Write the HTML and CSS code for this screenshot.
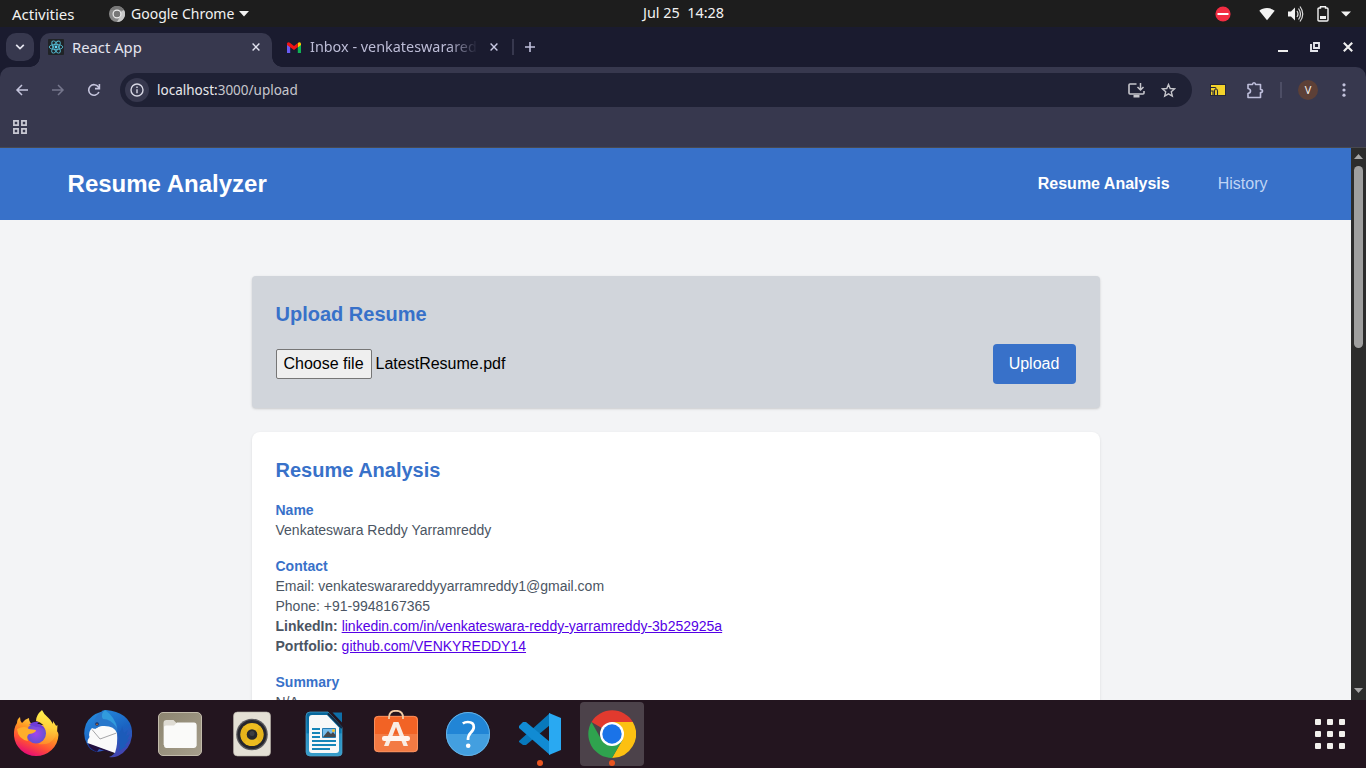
FILE: index.html
```html
<!DOCTYPE html>
<html lang="en">
<head>
<meta charset="utf-8">
<title>React App</title>
<link rel="stylesheet" href="styles.css">
</head>
<body>
<div class="desktop">
  <header class="topbar">
    <span class="activities">Activities</span>
    <div class="app-menu">
      <svg width="16" height="16" viewBox="0 0 16 16"><circle cx="8" cy="8" r="8" fill="#888"/><path d="M8 8 15 4A8 8 0 0 1 8 16l4-7z" fill="#c8c8c8"/><path d="M1 4a8 8 0 0 1 14 0H8z" fill="#777"/><circle cx="8" cy="8" r="3.9" fill="#777" stroke="#eee" stroke-width="1.2"/></svg>
      <span class="app-name">Google Chrome</span>
      <svg width="10" height="6" viewBox="0 0 10 6"><path d="M0 0h10L5 5.5z" fill="#f2f2f2"/></svg>
    </div>
    <span class="clock">Jul 25  14:28</span>
    <div class="status">
      <svg class="dnd" width="16" height="16" viewBox="0 0 16 16"><circle cx="8" cy="8" r="7.6" fill="#f22c42"/><path d="M2.5 7h11v2h-11z" fill="#fff"/></svg>
      <svg class="wifi" width="16" height="16" viewBox="0 0 16 16"><path d="M.3 4.8C4.2 1.2 11.8 1.2 15.7 4.8L8 14.3z" fill="#f2f2f2"/></svg>
      <svg class="volume" width="16" height="16" viewBox="0 0 16 16"><path d="M0 5.500h3l4-4v13l-4-4H0z" fill="#f2f2f2"/><path d="M9 5q2 3 0 6M10.500 2.500q4 5.500 0 11M12 .5q5.500 7.500 0 15" fill="none" stroke="#ddd" stroke-width="1.2"/></svg>
      <svg class="battery" width="12" height="16" viewBox="0 0 12 16"><path d="M3.500 2V.8h5V2H10q1 0 1 1v11q0 1-1 1H2q-1 0-1-1V3q0-1 1-1z" fill="none" stroke="#f2f2f2" stroke-width="1.4"/><path d="M3 10h6v3H3z" fill="#f2f2f2"/></svg>
      <svg width="10" height="6" viewBox="0 0 10 6"><path d="M0 .5h10L5 5.500z" fill="#f2f2f2"/></svg>
    </div>
  </header>

  <div class="tabstrip">
    <button class="tab-search"><svg width="10" height="6" viewBox="0 0 10 6"><path d="M1.2.8 5 4.600 8.800.8" fill="none" stroke="#e4e4ee" stroke-width="1.7"/></svg></button>
    <div class="tab tab-active">
      <svg width="16" height="16" viewBox="0 0 16 16"><rect width="16" height="16" rx="1" fill="#202326"/><g fill="none" stroke="#53b9d1" stroke-width=".9"><ellipse cx="8" cy="8" rx="6.8" ry="2.600"/><ellipse cx="8" cy="8" rx="6.8" ry="2.600" transform="rotate(60 8 8)"/><ellipse cx="8" cy="8" rx="6.8" ry="2.600" transform="rotate(120 8 8)"/></g><circle cx="8" cy="8" r="1.4" fill="#61dafb"/></svg>
      <span class="tab-title">React App</span>
      <svg class="close" width="8" height="8" viewBox="0 0 8 8"><path d="m.6.6 6.800 6.800M7.400.6.6 7.400" stroke="#e2e2ef" stroke-width="1.4"/></svg>
    </div>
    <div class="tab tab-idle">
      <svg width="14" height="11" viewBox="0 0 14 11"><path d="M0 2v9h3.200V4.500z" fill="#685cf2"/><path d="M10.800 4.500V11H14V2z" fill="#0fb255"/><path d="M10.800 1v4.500L14 3V1.500Q13-.5 10.800 1z" fill="#ffc400"/><path d="M0 3V1.500Q1-.5 3.200 1L7 4l3.800-3v4L7 8 3.200 5.300z" fill="#f21414"/></svg>
      <span class="tab-title tab-fade">Inbox - venkateswarared</span>
      <svg class="close" width="8" height="8" viewBox="0 0 8 8"><path d="m.6.6 6.800 6.800M7.400.6.6 7.400" stroke="#c8c8e2" stroke-width="1.4"/></svg>
    </div>
    <span class="tab-divider"></span>
    <svg class="new-tab" width="10" height="10" viewBox="0 0 10 10"><path d="M5 0v10M0 5h10" stroke="#c0c0dc" stroke-width="1.6"/></svg>
    <div class="window-controls">
      <svg width="10" height="12" viewBox="0 0 10 12"><path d="M0 9h10v2H0z" fill="#eee"/></svg>
      <svg width="10" height="10" viewBox="0 0 10 10"><path d="M4 1h5v5H4zM1 2v7h7" fill="none" stroke="#e4e5ec" stroke-width="1.9"/></svg>
      <svg width="10" height="10" viewBox="0 0 10 10"><path d="m.8.8 8.400 8.400M9.200.8.8 9.200" stroke="#eee" stroke-width="2.1"/></svg>
    </div>
  </div>

  <div class="toolbar">
    <svg class="back" width="14" height="14" viewBox="0 0 14 14"><path d="M13 7H2.500M7 2 2 7l5 5" fill="none" stroke="#c5c5dd" stroke-width="1.5"/></svg>
    <svg class="forward" width="14" height="14" viewBox="0 0 14 14"><path d="M1 7h10.500M7 2l5 5-5 5" fill="none" stroke="#75768c" stroke-width="1.5"/></svg>
    <svg class="reload" width="14" height="14" viewBox="0 0 14 14"><path d="M11.900 9A5.300 5.300 0 1 1 11.400 4L12 5" fill="none" stroke="#c5c5dd" stroke-width="1.6"/><path d="M12.400 1v4.600H8" fill="none" stroke="#c5c5dd" stroke-width="1.6"/></svg>
    <div class="omnibox">
      <span class="site-info"><svg width="14" height="14" viewBox="0 0 14 14"><circle cx="7" cy="7" r="6" fill="none" stroke="#d8d8e4" stroke-width="1.4"/><path d="M7 6.200v4M7 3.600v1.500" stroke="#d8d8e4" stroke-width="1.4"/></svg></span>
      <span class="url"><span class="host">localhost:</span>3000/upload</span>
      <svg class="install" width="17" height="15" viewBox="0 0 17 15"><path d="M8.500 1H2Q1 1 1 2v8q0 1 1 1h13q1 0 1-1V8" fill="none" stroke="#c6c6cc" stroke-width="1.6"/><path d="M5.500 12h6v2.500h-6z" fill="#c6c6cc"/><path d="M12.500 0v6.500M9.500 4l3 3 3-3" fill="none" stroke="#c6c6cc" stroke-width="1.5"/></svg>
      <svg class="star" width="15" height="15" viewBox="0 0 15 15"><path d="m7.500 1.500 1.700 4 4.400.4-3.300 2.900 1 4.300-3.800-2.300-3.800 2.300 1-4.300-3.300-2.900 4.400-.4z" fill="none" stroke="#c6c6cc" stroke-width="1.4"/></svg>
    </div>
    <svg class="extension" width="16" height="12" viewBox="0 0 16 12"><rect width="16" height="12" fill="#252739"/><path d="M1 1h14v10H1z" fill="#f3d32a"/><path d="M1 3.500h4q1 0 1 1M4.500 11V7q0-2 1.500-2T7.500 7v4M1 7h2v4" fill="none" stroke="#252739" stroke-width="1.1"/></svg>
    <svg class="puzzle" width="18" height="17" viewBox="0 0 18 17"><path d="M2 2.500h4.500Q6.500.8 8 .8t1.500 1.700H14.500v5q2 0 2 1.500t-2 1.500v5H2v-4q2.500-.5 2.500-2.500T2 6.500z" fill="none" stroke="#bfbfdc" stroke-width="1.6" stroke-linejoin="round"/></svg>
    <span class="toolbar-divider"></span>
    <span class="avatar">V</span>
    <svg class="kebab" width="4" height="14" viewBox="0 0 4 14"><g fill="#c2c2dc"><circle cx="2" cy="1.800" r="1.600"/><circle cx="2" cy="7" r="1.600"/><circle cx="2" cy="12.200" r="1.600"/></g></svg>
  </div>

  <div class="bookmarks">
    <svg width="14" height="14" viewBox="0 0 14 14"><path d="M.9.9h4.200v4.200H.9zM8.900.9h4.200v4.200H8.900zM.9 8.900h4.200v4.200H.9zM8.900 8.900h4.200v4.200H8.900z" fill="none" stroke="#c9c9d4" stroke-width="1.7"/></svg>
  </div>

  <div class="viewport">
    <div class="page">
      <nav class="navbar">
        <h1 class="brand">Resume Analyzer</h1>
        <div class="nav-links">
          <a class="nav-link nav-current">Resume Analysis</a>
          <a class="nav-link">History</a>
        </div>
      </nav>
      <main class="content">
        <section class="upload-card">
          <h2 class="card-title">Upload Resume</h2>
          <div class="upload-row">
            <div class="file-field"><span class="file-button">Choose file</span><span>LatestResume.pdf</span></div>
            <button class="upload-button">Upload</button>
          </div>
        </section>
        <section class="analysis-card">
          <h2 class="card-title">Resume Analysis</h2>
          <div class="block">
            <h3 class="label">Name</h3>
            <p>Venkateswara Reddy Yarramreddy</p>
          </div>
          <div class="block">
            <h3 class="label">Contact</h3>
            <p>Email: venkateswarareddyyarramreddy1@gmail.com</p>
            <p>Phone: +91-9948167365</p>
            <p><strong>LinkedIn:</strong> <a class="link">linkedin.com/in/venkateswara-reddy-yarramreddy-3b252925a</a></p>
            <p><strong>Portfolio:</strong> <a class="link">github.com/VENKYREDDY14</a></p>
          </div>
          <div class="block">
            <h3 class="label">Summary</h3>
            <p>N/A</p>
          </div>
        </section>
      </main>
    </div>
    <div class="scrollbar">
      <svg width="9" height="5" viewBox="0 0 9 5"><path d="M0 5 4.500 0 9 5z" fill="#a6a6a6"/></svg>
      <span class="thumb"></span>
      <svg class="scroll-down" width="9" height="5" viewBox="0 0 9 5"><path d="M0 0h9L4.500 5z" fill="#a6a6a6"/></svg>
    </div>
  </div>

  <footer class="dock">
    <span class="dock-item"><svg width="48" height="48" viewBox="0 0 48 48">
      <defs>
        <linearGradient id="fx" x1=".8" y1="0" x2=".3" y2="1"><stop offset=".1" stop-color="#ffe04b"/><stop offset=".4" stop-color="#ff9b22"/><stop offset=".7" stop-color="#ff4f35"/><stop offset="1" stop-color="#e4057c"/></linearGradient>
        <linearGradient id="fy" x1=".5" y1="0" x2=".4" y2="1"><stop offset="0" stop-color="#fff44f"/><stop offset=".5" stop-color="#ffd03a"/><stop offset="1" stop-color="#ff8a2a"/></linearGradient>
        <radialGradient id="fp"><stop offset="0" stop-color="#a344ee"/><stop offset="1" stop-color="#6552d0"/></radialGradient>
      </defs>
      <path d="M8 7q0 4 2 6 3-4 7-5 0 4 3 6l20 2q6 4 6.500 9A22.300 22 0 0 1 24 46 22.300 22 0 0 1 2 26Q1.500 18 5 13q0-4 3-6z" fill="url(#fx)"/>
      <path d="M30 0q-6 5-6 11 9 2 10 11-1 9-8 12 12 2 17-7 3-6 2.500-12Q44 17 43 14l-2-3v3q-2-4-5-6.500-4-3-6-7.500z" fill="url(#fy)"/>
      <circle cx="24" cy="23.500" r="10" fill="url(#fp)"/>
      <path d="M17 15q4-4 10-3l-2 2q7 1 8 6-4-4-9-3-3-2-7-2z" fill="#6f3bd8"/>
      <path d="M5 19q8-4 12 0l7 1q0 3-7 4-3 2-1 7-10-2-11-12z" fill="#ffae2b"/>
    </svg></span>
    <span class="dock-item"><svg width="48" height="48" viewBox="0 0 48 48">
      <defs><linearGradient id="tb" x1=".3" y1="0" x2=".8" y2="1"><stop offset="0" stop-color="#2589dc"/><stop offset=".5" stop-color="#1a63c2"/><stop offset="1" stop-color="#4a3fae"/></linearGradient></defs>
      <path d="M22 0Q18 0 18 1.500 6 5 2 14q-4 11 1 20 4 6 10 8l10-2 8 2q-1 3-6 5 4 1 9-1 12-6 14-20 1-13-8-20Q33 1 22 0z" fill="url(#tb)"/>
      <path d="M3 32.500 13 42Q4 40 3 32.500z" fill="#183d9b"/>
      <path d="M4 32.500 31 43l-7-1-9-3-2 3Q5 39 4 32.500z" fill="#22103f"/>
      <path d="M8 18q3 2 8-2h13q4 2 4 7 1 11-2 20L3.500 33q-.5-3 2-6-1.500-5 2.500-9z" fill="#fafafa"/>
      <path d="m8 19.500 8 9.500 16.500-6" fill="none" stroke="#a5a5a8" stroke-width="1"/>
      <path d="M18 1.500Q10 6 10 14q0 4 1 5 3-3 7-3 12-1 15 7 2-11-6-15Q23 4 18 1.500z" fill="#2877cb"/>
      <path d="M21 0q-5 4-2 9 8 0 14 9-2-11-12-18z" fill="#319bdd"/>
      <path d="M34 24q4-4 4-8l2 7 4-3-2 6 4-2-3 6 3-1-5 6 2 1-8 5q2-9-1-17z" fill="#1c5bb9"/>
      <circle cx="13" cy="14" r="1.800" fill="#122d68"/><circle cx="13" cy="14.300" r=".9" fill="#b66d32"/>
    </svg></span>
    <span class="dock-item"><svg width="48" height="48" viewBox="0 0 48 48"><defs><linearGradient id="fi" x2="1" y2="1"><stop stop-color="#8c8570"/><stop offset="1" stop-color="#a69e8c"/></linearGradient></defs><rect x="2.500" y="2.500" width="43" height="43" rx="4.500" fill="url(#fi)" stroke="#c2bbab"/><path d="M7.500 35V13q0-3 3-3h7l3 3h17q3 0 3 3v20z" fill="#dedbd3"/><path d="M8 17q0-1.500 2-1.500h8l3-3h17q2.500 0 2.500 2.500v20q0 3-3 3H10.500q-2.500 0-2.500-3z" fill="#fafaf9"/></svg></span>
    <span class="dock-item"><svg width="48" height="48" viewBox="0 0 48 48"><rect x="5.500" y="2" width="37" height="44" rx="4" fill="#e4e0d5" stroke="#b7b2a7" stroke-width=".6"/><circle cx="24" cy="24.500" r="15.800" fill="#5b5a5e"/><circle cx="24" cy="24.500" r="14.500" fill="#25262d"/><circle cx="24" cy="24.500" r="11.600" fill="#ecbc20"/><path d="m24 24.500-8 8a11.400 11.400 0 0 1 0-16zM24 24.500l8-8a11.400 11.400 0 0 1 0 16z" fill="#e5b31b"/><circle cx="24" cy="24.500" r="5.300" fill="#25272c"/><circle cx="24" cy="23.500" r="2.500" fill="#3c3e43"/></svg></span>
    <span class="dock-item"><svg width="48" height="48" viewBox="0 0 48 48"><defs><linearGradient id="wr" x2="0" y2="1"><stop stop-color="#086599"/><stop offset=".47" stop-color="#0877af"/><stop offset=".5" stop-color="#2690c4"/><stop offset="1" stop-color="#389dca"/></linearGradient></defs><path d="M10 2h18l14 15v26q0 3-4 3H10q-4 0-4-4V6q0-4 4-4z" fill="url(#wr)" stroke="#4ca4cd" stroke-width=".7"/><path d="M12 5h15l12 12.500V40q0 3-3 3H12q-3 0-3-3V8q0-3 3-3z" fill="#f8f8f8"/><path d="M32.500 2.500H42v10z" fill="#0f6fa8"/><path d="M28 3.500 42 18" stroke="#132c45" stroke-width="2"/><path d="M12 19h8M12 23h8M12 27h8M12 31h24M12 35h24M12 39h18" stroke="#1685b8" stroke-width="1.800"/><path d="M22.500 18.500h13v9h-13z" fill="#76bdec" stroke="#247bb1"/><path d="m23 27 5-6 3 3 2-2 2.500 3v2z" fill="#46484c"/><circle cx="33.500" cy="20.500" r="1.500" fill="#f4c02a"/></svg></span>
    <span class="dock-item"><svg width="48" height="48" viewBox="0 0 48 48"><path d="M6 6h36q4 0 4 4v14H2V10q0-4 4-4z" fill="#f26325"/><path d="M2 24h44v14q0 4-4 4H6q-4 0-4-4z" fill="#f37a43"/><rect x="2.500" y="6.300" width="43" height="35.500" rx="4" fill="none" stroke="#fa9a6c" stroke-width=".8"/><path d="M17 9V7.500Q17 .8 24 .8t7 6.700V9" fill="none" stroke="#f2cda6" stroke-width="1.800"/><path d="M21.500 12h5L36 36h-4.500L24 17l-7.500 19H12z" fill="#f8ece4"/><rect x="10" y="26" width="28" height="5" rx="2.200" fill="#fff5ef"/></svg></span>
    <span class="dock-item"><svg width="48" height="48" viewBox="0 0 48 48"><path d="M2 24a22 22 0 0 1 44 0z" fill="#2185d6"/><path d="M2 24a22 22 0 0 0 44 0z" fill="#439fe0"/><circle cx="24" cy="24" r="21.500" fill="none" stroke="#65b2e6"/><path d="M18.800 13.500q2-1.500 5-1.500 6 0 6 5 0 3-3.300 6-2.500 2.500-2.500 7" fill="none" stroke="#fff" stroke-width="2.700"/><circle cx="24.200" cy="35.700" r="2.300" fill="#fff"/></svg></span>
    <span class="dock-item"><svg width="48" height="48" viewBox="0 0 48 48"><path d="M3 31 34 3v12L10 35H7l-4-3z" fill="#0879bc"/><path d="m3 16 4-4h3l24 20v13L3 18z" fill="#118bd3"/><path d="m33 3 12 5v32l-12 5z" fill="#29a9f2"/></svg><span class="running"></span></span>
    <span class="dock-item dock-active"><svg width="48" height="48" viewBox="0 0 48 48"><path d="M24 24 3.500 12A24 24 0 0 1 44.800 12z" fill="#e23a2e"/><path d="M24 12h20.800A24 24 0 0 1 24 48l10.400-18z" fill="#fcc012"/><path d="M3.500 12A24 24 0 0 0 24 48l10.400-18H13.600z" fill="#2fa34e"/><circle cx="24" cy="24" r="12" fill="#fff"/><circle cx="24" cy="24" r="9.700" fill="#1a73e8"/></svg><span class="running"></span></span>
    <div class="app-grid"><i></i><i></i><i></i><i></i><i></i><i></i><i></i><i></i><i></i></div>
  </footer>
</div>
</body>
</html>
```
FILE: styles.css
```css
* { box-sizing: border-box; }
body { margin: 0; overflow: hidden; font-family: "Liberation Sans", Arial, sans-serif; }
h1, h2, h3, p { margin: 0; }
svg { display: block; flex-shrink: 0; }
button { border: 0; padding: 0; font: inherit; }

.desktop { width: 1366px; height: 768px; display: flex; flex-direction: column; overflow: hidden; background: #1a1b2f; }
.topbar, .tabstrip, .toolbar { font-family: "Noto Sans", sans-serif; white-space: pre; flex-shrink: 0; }

.topbar { height: 27px; display: grid; grid-template-columns: 109px 534px 1fr auto; align-items: center; background: #1d1d1d; color: #f2f2f2; font-size: 14px; line-height: 26px; }
.activities { padding-left: 12px; font-size: 15px; }
.app-menu { display: flex; align-items: center; gap: 6px; }
.app-menu svg:last-child { margin-left: -1px; }
.clock { font-size: 14.4px; line-height: 24px; padding-bottom: 2px; }
.status { display: flex; align-items: center; padding-right: 15px; }
.dnd { margin-right: 28px; }
.wifi { margin-right: 13px; }
.volume { margin-right: 13px; }
.battery { margin-right: 12px; }

.tabstrip { height: 40px; display: flex; align-items: center; background: #1a1b2f; padding-right: 13px; }
.tab-search { width: 28px; height: 28px; margin: 0 6px; border-radius: 10px; background: #37384e; display: flex; align-items: center; justify-content: center; }
.tab { display: flex; align-items: center; height: 34px; }
.tab-active { position: relative; align-self: flex-end; width: 232px; padding: 0 12px 6px 8px; border-radius: 10px 10px 0 0; background: #37384e; color: #e4e4ef; }
.tab-active::before, .tab-active::after { content: ""; position: absolute; bottom: 0; width: 10px; height: 10px; }
.tab-active::before { right: 100%; background: radial-gradient(circle at 0 0, transparent 9.5px, #37384e 10px); }
.tab-active::after { left: 100%; background: radial-gradient(circle at 100% 0, transparent 9.5px, #37384e 10px); }
.tab-active .tab-title { margin-left: 8px; }
.tab-title { font-size: 14.8px; line-height: 20px; }
.tab-idle { width: 241px; padding: 0 15px; color: #bcbcd6; }
.tab-fade { width: 168px; margin-left: 9px; overflow: hidden; font-size: 14.4px; -webkit-mask-image: linear-gradient(90deg, #000 82%, transparent); mask-image: linear-gradient(90deg, #000 82%, transparent); }
.close { margin-left: auto; }
.tab-divider { width: 2px; height: 16px; margin-left: -1px; background: #37384e; }
.new-tab { margin-left: 11px; }
.window-controls { margin-left: auto; display: flex; align-items: center; gap: 23px; }
.window-controls svg:first-child { margin-right: -1px; margin-top: -1px; }

.toolbar { height: 46px; display: flex; align-items: center; padding: 0 20px 0 15px; background: #37384e; border-radius: 10px 10px 0 0; }
.back { margin-right: 22px; }
.forward { margin-right: 22px; }
.reload { margin-right: 19px; }
.omnibox { width: 1072px; height: 34px; display: flex; align-items: center; padding: 0 16px 0 5px; border-radius: 17px; background: #1f2135; color: #c7c7cd; }
.site-info { width: 24px; height: 24px; display: flex; align-items: center; justify-content: center; border-radius: 50%; background: #37384e; }
.url { margin-left: 8px; font-size: 13.5px; line-height: 20px; }
.host { color: #e8e8ec; }
.install { margin-left: auto; margin-right: 16px; }
.extension { margin-left: 18px; }
.puzzle { margin-left: 20px; }
.toolbar-divider { width: 2px; height: 16px; margin-left: 16px; background: #4d4e65; }
.avatar { width: 20px; height: 20px; margin-left: 16px; border-radius: 50%; background: #5d4037; color: #f4eeee; font-size: 11px; line-height: 20px; text-align: center; }
.kebab { margin-left: auto; }
.bookmarks { height: 35px; display: flex; align-items: flex-start; flex-shrink: 0; padding: 7px 13px; background: #37384e; border-bottom: 1px solid #49494f; }

.viewport { height: 552px; display: flex; flex-shrink: 0; overflow: hidden; }
.page { width: 1351px; height: 552px; overflow: hidden; background: #f3f4f6; }
.navbar { height: 72px; padding: 0 5%; display: flex; align-items: center; justify-content: space-between; background: #3871c9; }
.brand { color: #fff; font-size: 24px; line-height: 32px; }
.nav-links { display: flex; gap: 16px; }
.nav-link { padding: 8px 16px; color: #c0d5f5; font-size: 16px; line-height: 24px; }
.nav-current { color: #fff; font-weight: 700; }
.content { width: 848px; margin: 56px auto 0; display: flex; flex-direction: column; gap: 24px; }
.upload-card { height: 132px; padding: 24px; border-radius: 4px; background: #d1d5db; box-shadow: 0 1px 3px rgba(0, 0, 0, .12), 0 1px 2px rgba(0, 0, 0, .06); }
.card-title { color: #3871c9; font-size: 20px; line-height: 28px; }
.upload-row { display: flex; align-items: center; justify-content: space-between; margin-top: 16px; }
.file-field { display: flex; align-items: center; gap: 4px; font-size: 16px; line-height: 24px; }
.file-button { height: 30px; padding: 2px 7px; border: 1px solid #767676; border-radius: 2px; background: #efefef; color: #000; }
.upload-button { width: 83px; height: 40px; border-radius: 4px; background: #3871c9; color: #fff; font-size: 16px; }
.analysis-card { height: 400px; padding: 24px; border-radius: 8px; background: #fff; box-shadow: 0 1px 3px rgba(0, 0, 0, .1); color: #4b5563; font-size: 14px; line-height: 20px; }
.block { margin-top: 16px; }
.label { color: #3871c9; font-size: 14px; line-height: 20px; }
.link { color: #5500e6; text-decoration: underline; }

.scrollbar { width: 15px; display: flex; flex-direction: column; align-items: center; padding: 6px 0 7px; background: #2c2c2c; }
.thumb { width: 9px; height: 182px; margin-top: 7px; border-radius: 5px; background: #9f9f9f; }
.scroll-down { margin-top: auto; }

.dock { height: 68px; display: flex; align-items: center; gap: 8px; padding: 0 21px 0 4px; background: #23151f; flex-shrink: 0; }
.dock-item { position: relative; width: 64px; height: 64px; display: flex; align-items: center; justify-content: center; border-radius: 4px; }
.dock-active { background: #4c424a; }
.running { position: absolute; left: 29px; bottom: 0; width: 6px; height: 6px; border-radius: 50%; background: #e95420; }
.app-grid { margin-left: auto; display: grid; grid-template-columns: repeat(3, 6px); gap: 6px; }
.app-grid i { width: 6px; height: 6px; border-radius: 1px; background: #f2f0ec; }
```
